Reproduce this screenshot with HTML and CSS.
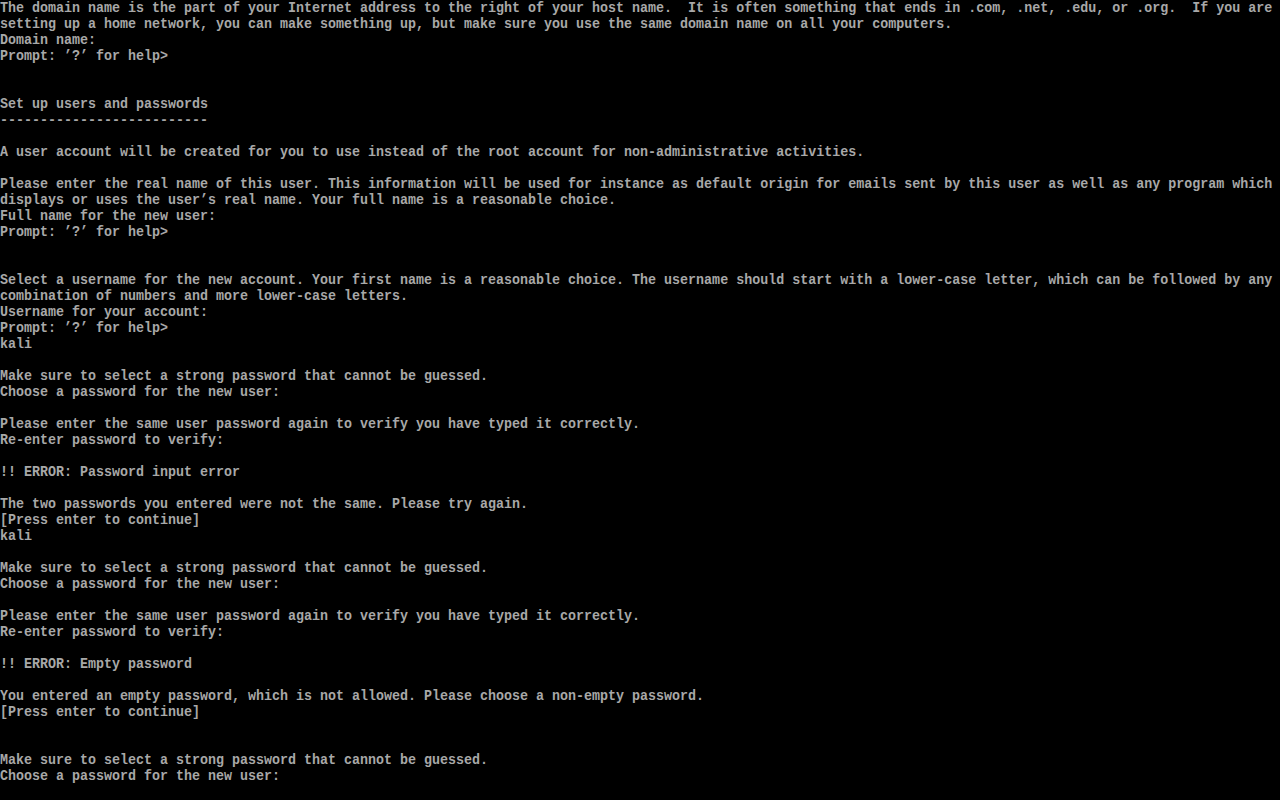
FILE: index.html
```html
<!DOCTYPE html>
<html lang="en">
<head>
    <meta charset="UTF-8">
    <title>Debian installer - console</title>
    <link rel="stylesheet" href="styles.css">
</head>
<body>
<pre class="console">The domain name is the part of your Internet address to the right of your host name.  It is often something that ends in .com, .net, .edu, or .org.  If you are
setting up a home network, you can make something up, but make sure you use the same domain name on all your computers.
Domain name:
Prompt: ’?’ for help&gt;


Set up users and passwords
--------------------------

A user account will be created for you to use instead of the root account for non-administrative activities.

Please enter the real name of this user. This information will be used for instance as default origin for emails sent by this user as well as any program which
displays or uses the user’s real name. Your full name is a reasonable choice.
Full name for the new user:
Prompt: ’?’ for help&gt;


Select a username for the new account. Your first name is a reasonable choice. The username should start with a lower-case letter, which can be followed by any
combination of numbers and more lower-case letters.
Username for your account:
Prompt: ’?’ for help&gt;
kali

Make sure to select a strong password that cannot be guessed.
Choose a password for the new user:

Please enter the same user password again to verify you have typed it correctly.
Re-enter password to verify:

!! ERROR: Password input error

The two passwords you entered were not the same. Please try again.
[Press enter to continue]
kali

Make sure to select a strong password that cannot be guessed.
Choose a password for the new user:

Please enter the same user password again to verify you have typed it correctly.
Re-enter password to verify:

!! ERROR: Empty password

You entered an empty password, which is not allowed. Please choose a non-empty password.
[Press enter to continue]


Make sure to select a strong password that cannot be guessed.
Choose a password for the new user:
</pre>
</body>
</html>
```

FILE: styles.css
```css
html, body {
    margin: 0;
    padding: 0;
    background-color: #000;
    height: 100%;
    overflow: hidden;
}
/* 8x16 VGA cells: 15px glyphs squeezed to an 8px advance */
.console {
    margin: 0;
    padding: 1px 0 0 0;
    font-family: "Liberation Mono", "DejaVu Sans Mono", monospace;
    font-size: 15px;
    font-weight: bold;
    line-height: 16px;
    color: #a8a8a8;
    white-space: pre;
    transform: scaleX(0.8889);
    transform-origin: 0 0;
}
```
